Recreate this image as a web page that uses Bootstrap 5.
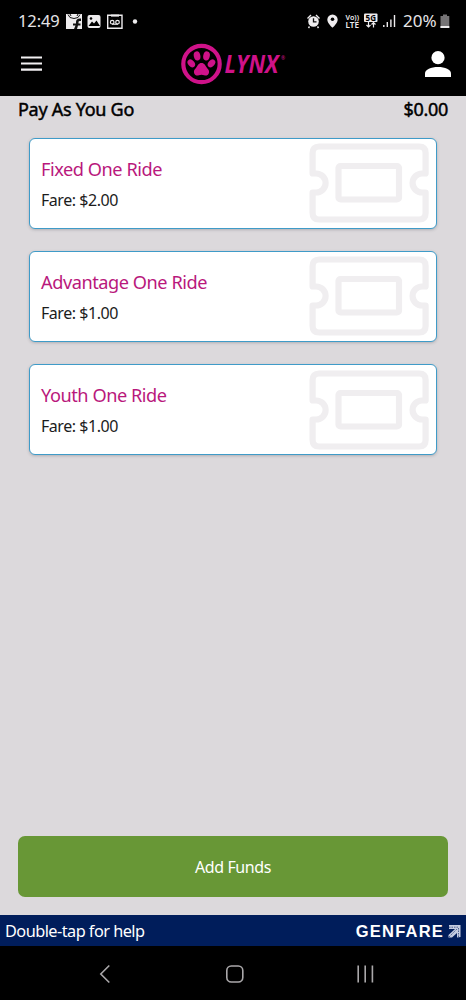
<!DOCTYPE html>
<html lang="en">
<head>
<meta charset="utf-8">
<meta name="viewport" content="width=device-width, initial-scale=1">
<title>Pay As You Go</title>
<link href="https://cdn.jsdelivr.net/npm/bootstrap@5.3.0/dist/css/bootstrap.min.css" rel="stylesheet">
<style>
  body { font-family: "Noto Sans", sans-serif; background: #dcd9dc; color: #000; overflow: hidden; }
  svg { display: block; flex: none; }
  .status { height: 32px; padding: 10px 16px 0 18px; color: #e6e4e6; font-size: 16.5px; line-height: 22px; }
  .status span { white-space: nowrap; }
  .clock { letter-spacing: -.1px; width: 43px; }
  .pct { width: 37px; margin-left: 5px; font-size: 17px; letter-spacing: 0; }
  .appbar { height: 64px; padding: 0 15px 0 21px; }
  .account { height: 26px; padding: 0 18px; line-height: 26px; font-size: 18px; letter-spacing: -.28px; -webkit-text-stroke: .45px #000; }
  .fares { padding: 15.5px 29px 0; gap: 22px; }
  .fare { height: 91.3px; border: 1.4px solid #3f9bc8; border-radius: 6px; padding: 0 7px 0 11px; box-shadow: 0 1px 3px rgba(60,70,80,.28); }
  .fare h2 { font-size: 18.2px; line-height: 24px; margin: 0 0 9px; color: #b9187c; font-weight: 400; letter-spacing: -.46px; }
  .fare p { font-size: 16px; line-height: 20px; margin: 0; color: #1c1c1c; letter-spacing: -.46px; }
  .add { height: 61px; margin: 0 18px 18px; border: 0; border-radius: 7px; background: #689736; color: #fff; font-size: 16px; letter-spacing: -.4px; padding-top: 7px; }
  .help { height: 31px; background: #001d5b; color: #fff; padding: 2px 5px 0; font-size: 16.3px; letter-spacing: -.53px; }
  .brand { font: 700 16.5px "Liberation Sans", sans-serif; letter-spacing: 1.2px; }
  .sysnav { height: 54px; }
</style>
</head>
<body>
<div class="vh-100 d-flex flex-column">
  <header class="bg-black">
    <div class="status d-flex justify-content-between align-items-center">
      <div class="d-flex align-items-center">
        <span class="clock">12:49</span>
        <svg class="ms-1" width="80" height="20" viewBox="0 0 80 20">
          <path d="M1 3h16v15H1z" fill="#eeecee"/>
          <path d="M3 3.500q1 4 6 4t6-4M5 3l1 2m7-2-1 2" fill="none" stroke="#111" stroke-width="1"/>
          <path d="M16 7.500q-5-.5-5 3.500v1.500H8v2h2.500L9 18h3l1-3.500h2.500v-2h-2V11q0-1.500 2.500-1z" fill="#111"/>
          <rect x="22.500" y="4" width="13" height="13" rx="2" fill="#eeecee"/>
          <circle cx="26" cy="7.500" r="1.300"/><path d="m23.500 15 3.500-4.500 2 2 2.500-3 3.500 5.500z"/>
          <path d="M42.700 4.300h14.300v12.900H42.700z" fill="none" stroke="#eeecee" stroke-width="1.400"/>
          <path d="M46 3.600h8v2h-8z" fill="#eeecee"/>
          <g fill="none" stroke="#eeecee" stroke-width="1.200"><circle cx="47.200" cy="11.200" r="1.800"/><circle cx="52.500" cy="11.200" r="1.800"/><path d="M47 13.200h6"/></g>
          <circle cx="70" cy="10.500" r="2.200" fill="#eeecee"/>
        </svg>
      </div>
      <div class="d-flex align-items-center">
        <svg width="92" height="20" viewBox="307 11 92 20">
          <circle cx="314.500" cy="21.500" r="5.300" fill="#eeecee"/>
          <path d="M308.500 18.500l3.500-3.500m5 0 3.500 3.500M310.500 26.500l-1 1.500m9-1.500 1 1.500" stroke="#eeecee" stroke-width="1.400"/>
          <path d="M314.500 18.300v3.500h3" fill="none" stroke="#111" stroke-width="1.300"/>
          <path d="M333.500 14.500a5.200 5.200 0 0 0-5.200 5.200c0 3.500 5.200 8 5.200 8s5.200-4.500 5.200-8a5.200 5.200 0 0 0-5.200-5.200z" fill="#eeecee"/><circle cx="333.500" cy="19.300" r="1.800"/>
          <g fill="#eeecee" font-family="Noto Sans" font-weight="600"><text x="346.500" y="19.500" font-size="7" textLength="13.500" lengthAdjust="spacingAndGlyphs">Vo))</text><text x="346.500" y="28" font-size="8.500" textLength="13.500" lengthAdjust="spacingAndGlyphs">LTE</text></g>
          <rect x="365" y="13.500" width="13.500" height="8.500" rx="1" fill="#eeecee"/>
          <text x="366.500" y="20.700" font-family="Noto Sans" font-weight="700" font-size="8" textLength="10.500" lengthAdjust="spacingAndGlyphs">5G</text>
          <path d="M369.500 22v5m-2-2 2 2 2-2m3 2.500v-5m-2 2 2-2 2 2" fill="none" stroke="#eeecee" stroke-width="1.200"/>
          <path d="M384.800 27v-2m3.500 2v-5m3.600 5v-7.500m3.600 7.500V15" stroke="#eeecee" stroke-width="1.400"/>
        </svg>
        <span class="pct">20%</span>
        <svg width="10" height="16" viewBox="0 0 10 16"><path d="M.500 3H3V1.500h4V3h2.300v12H.500z" fill="#757375"/><path d="M.500 13h8.800v2H.500z" fill="#eeecee"/></svg>
      </div>
    </div>
    <div class="appbar d-flex align-items-center justify-content-between">
      <svg width="21" height="18" viewBox="0 0 21 18"><path d="M0 2.500h21M0 8.500h21M0 14.700h21" stroke="#f2f0f2" stroke-width="2.200"/></svg>
      <svg width="106" height="44" viewBox="181 42 106 44">
        <circle cx="201.500" cy="64" r="18.200" fill="none" stroke="#cf1289" stroke-width="4.200"/>
        <g fill="#cf1289">
          <ellipse cx="197.100" cy="55.900" rx="3.300" ry="4.600" transform="rotate(-12 197 56)"/>
          <ellipse cx="206.500" cy="55.900" rx="3.300" ry="4.600" transform="rotate(12 206.500 56)"/>
          <ellipse cx="191.300" cy="63.400" rx="3.100" ry="4.400" transform="rotate(-42 191.300 63.400)"/>
          <ellipse cx="211.500" cy="63.400" rx="3.100" ry="4.400" transform="rotate(42 211.500 63.400)"/>
          <path d="M201.500 63c-3 0-3.800 2.500-5.200 4.500-1.200 1.700-2.800 2.700-2.300 5.200.5 2.600 3.200 3.300 4.800 2.600 1.800-.8 3.600-.8 5.400 0 1.600.7 4.300 0 4.800-2.600.5-2.500-1.100-3.500-2.300-5.200-1.400-2-2.200-4.500-5.200-4.500z"/>
          <text x="224.500" y="73" font-family="Open Sans" font-style="italic" font-weight="700" font-size="24.500" textLength="54" lengthAdjust="spacingAndGlyphs">LYNX</text>
          <text x="281" y="60" font-family="Noto Sans" font-size="5">®</text>
        </g>
      </svg>
      <svg width="26" height="28" viewBox="0 0 26 28"><circle cx="13" cy="7.700" r="6.600" fill="#fff"/><path d="M0 27v-3.500c0-4 6-6.500 13-6.500s13 2.500 13 6.500V27z" fill="#fff"/></svg>
    </div>
  </header>

  <main class="flex-grow-1 d-flex flex-column">
    <div class="account d-flex justify-content-between"><span>Pay As You Go</span><span>$0.00</span></div>
    <div class="fares d-flex flex-column">
      <section class="fare bg-white d-flex align-items-center justify-content-between">
        <div><h2>Fixed One Ride</h2><p>Fare: $2.00</p></div>
        <svg width="120" height="80" viewBox="0 0 120 80"><use href="#ticket"/></svg>
      </section>
      <section class="fare bg-white d-flex align-items-center justify-content-between">
        <div><h2>Advantage One Ride</h2><p>Fare: $1.00</p></div>
        <svg width="120" height="80" viewBox="0 0 120 80"><use href="#ticket"/></svg>
      </section>
      <section class="fare bg-white d-flex align-items-center justify-content-between">
        <div><h2>Youth One Ride</h2><p>Fare: $1.00</p></div>
        <svg width="120" height="80" viewBox="0 0 120 80"><use href="#ticket"/></svg>
      </section>
    </div>
    <button class="add btn mt-auto" type="button">Add Funds</button>
  </main>

  <footer>
    <div class="help d-flex align-items-center justify-content-between">
      <span>Double-tap for help</span>
      <div class="d-flex align-items-center">
        <span class="brand">GENFARE</span>
        <svg class="ms-1" width="13" height="13" viewBox="0 0 13 13"><path d="M1 0h11.500V12L9 12.500V8l-5 4.500H.500V10L7 4H1z" fill="#c3cbe0"/><path d="M1 2.200h9M10.500 3v9M1 12l8-8" fill="none" stroke="#001d5b" stroke-width=".6" stroke-dasharray="1.500 1"/></svg>
      </div>
    </div>
    <nav class="sysnav bg-black">
      <svg width="466" height="54" viewBox="0 946 466 54" fill="none" stroke="#aaa8aa" stroke-width="1.600">
        <path d="M109.300 965.500l-8.500 8.500 8.500 8.500"/><rect x="226.800" y="966" width="16" height="16" rx="4.500"/><path d="M358.200 965.500v17m7-17v17m7.200-17v17"/>
      </svg>
    </nav>
  </footer>
</div>
<svg width="0" height="0" class="position-absolute">
  <symbol id="ticket" viewBox="0 0 120 80">
    <g fill="none" stroke="#f0eef0" stroke-width="6.200" stroke-linejoin="round"><path d="M3.600 30.500V10q0-6.500 6.500-6.500h100q6.500 0 6.500 6.500v20.500h-3.500a9.500 9.500 0 0 0 0 19h3.500V70q0 6.500-6.500 6.500h-100Q3.600 76.500 3.600 70V49.500h3.500a9.500 9.500 0 0 0 0-19z"/><rect x="29.500" y="23" width="60.500" height="33.500" rx="2"/></g>
  </symbol>
</svg>
<script src="https://cdn.jsdelivr.net/npm/bootstrap@5.3.0/dist/js/bootstrap.bundle.min.js"></script>
</body>
</html>
